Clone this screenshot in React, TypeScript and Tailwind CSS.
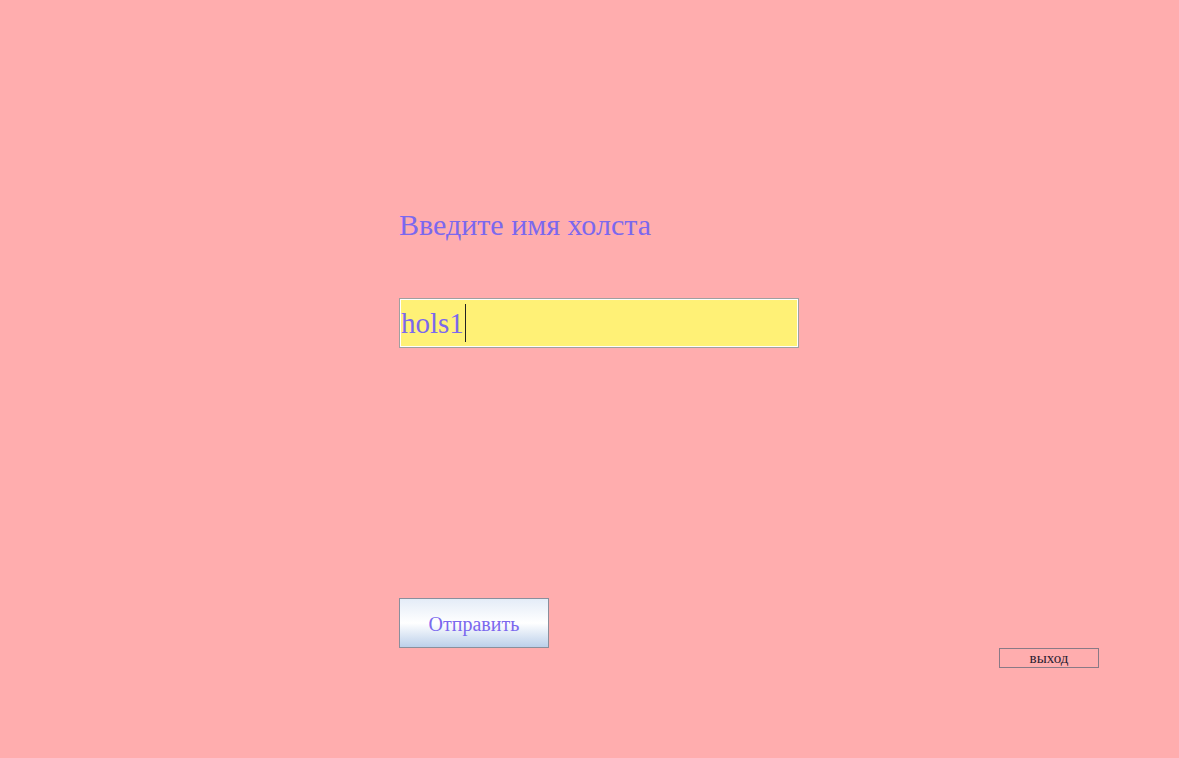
export default function App() {
  return (
    <main className="min-h-[758px] w-full bg-[#ffadae] font-['Liberation_Serif',serif]">
      <div className="flex flex-col pl-[399px] pt-[206px]">
        <h1 className="text-[30px] leading-[38px] text-[#7b68ee]">Введите имя холста</h1>

        <div className="mt-[54px] flex h-[50px] w-[400px] items-center border border-[#a0a0a0] bg-[#fff176] shadow-[inset_0_0_0_1px_#ffffff]">
          <span className="pl-[1px] text-[29px] leading-none text-[#7b68ee]">hols1</span>
          <span className="ml-[1px] h-[38px] w-px bg-[#222]" />
        </div>

        <button
          type="button"
          className="mt-[250px] h-[50px] w-[150px] border border-[#8a8f9c] bg-gradient-to-b from-[#e4ecf7] via-[#ffffff] to-[#bcd0ea] pt-[2px] text-[20px] text-[#7b68ee]"
        >
          Отправить
        </button>
      </div>

      <div className="flex justify-end pr-[80px]">
        <button
          type="button"
          className="h-[20px] w-[100px] border border-[#8a7a86] pt-[1px] text-[15px] leading-none text-[#2a2030]"
        >
          выход
        </button>
      </div>
    </main>
  );
}
